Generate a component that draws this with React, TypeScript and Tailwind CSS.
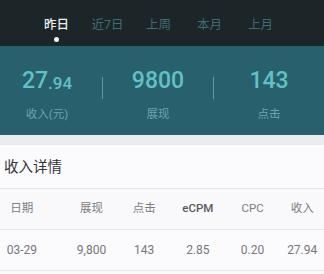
import React from "react";

const tabs = ["昨日", "近7日", "上周", "本月", "上月"];

const headers = ["日期", "展现", "点击", "eCPM", "CPC", "收入"];
const row = ["03-29", "9,800", "143", "2.85", "0.20", "27.94"];
// left margins so each 44px cell sits on the column centre
const cellMargin = ["ml-0", "ml-[26px]", "ml-[9px]", "ml-[10px]", "ml-[11px]", "ml-[6px]"];

export default function App() {
  return (
    <div
      className="w-[324px] h-[274px] overflow-hidden bg-[#fbfafd]"
      style={{ fontFamily: "Roboto, 'Noto Sans CJK SC', sans-serif" }}
    >
      {/* Tabs */}
      <div className="h-[46px] bg-[#1c2629] flex pl-[31px]">
        {tabs.map((t, i) => (
          <div key={t} className="w-[51px] flex flex-col items-center pt-[17px]">
            <span
              className={`text-[12.5px] leading-[16px] ${
                i === 0 ? "text-[#e9eeee] font-medium" : "text-[#3f6b73]"
              }`}
            >
              {t}
            </span>
            {i === 0 && <span className="mt-[4px] w-[5px] h-[5px] rounded-full bg-[#f2f4f4]" />}
          </div>
        ))}
      </div>

      {/* Summary */}
      <div className="h-[89px] bg-[#28606d] flex items-start pt-[21px]">
        <div className="w-[102px] pr-[8px] flex flex-col items-center">
          <div className="h-[28px] flex items-end text-[#60c1c7] font-medium">
            <span className="text-[23px] leading-[28px]">27</span>
            <span className="text-[17px] leading-[24px]">.94</span>
          </div>
          <span className="mt-[11px] text-[11.5px] text-[#6fa3ab]">收入(元)</span>
        </div>
        <div className="w-px h-[22px] mt-[10px] bg-[#5c9aa3]" />
        <div className="w-[110px] flex flex-col items-center">
          <span className="h-[28px] text-[23px] leading-[28px] text-[#60c1c7] font-medium">9800</span>
          <span className="mt-[11px] text-[11.5px] text-[#6fa3ab]">展现</span>
        </div>
        <div className="w-px h-[22px] mt-[10px] bg-[#5c9aa3]" />
        <div className="w-[110px] flex flex-col items-center">
          <span className="h-[28px] text-[23px] leading-[28px] text-[#60c1c7] font-medium">143</span>
          <span className="mt-[11px] text-[11.5px] text-[#6fa3ab]">点击</span>
        </div>
      </div>

      <div className="h-[10px] bg-[#eaedef]" />

      {/* Detail title */}
      <div className="h-[44px] flex items-center pl-[4px] pt-[2px] border-b border-[#e6e5ea]">
        <span className="text-[14.5px] text-[#333338]">收入详情</span>
      </div>

      {/* Table */}
      <div className="h-[41px] flex items-center bg-[#f9f8fb] border-b border-[#e6e5ea]">
        {headers.map((h, i) => (
          <div key={h} className={`w-[44px] flex justify-center ${cellMargin[i]}`}>
            <span
              className={`text-[11.5px] ${
                h === "eCPM" ? "text-[#5a5a5e] font-medium" : "text-[#7c7c81]"
              }`}
            >
              {h}
            </span>
          </div>
        ))}
      </div>
      <div className="h-[41px] flex items-center border-b border-[#e6e5ea]">
        {row.map((v, i) => (
          <div key={i} className={`w-[44px] flex justify-center ${cellMargin[i]}`}>
            <span className="text-[12px] text-[#77777c]">{v}</span>
          </div>
        ))}
      </div>
    </div>
  );
}
